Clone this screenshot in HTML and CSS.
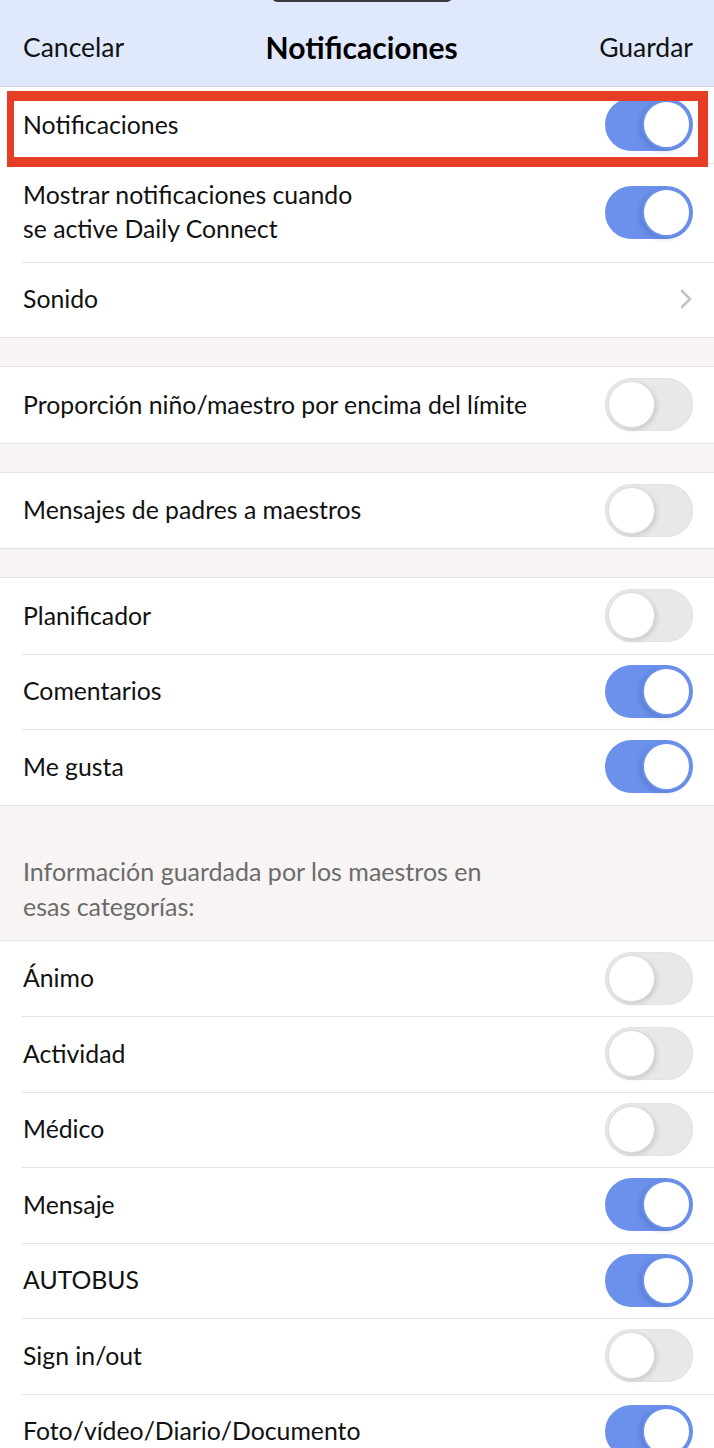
FILE: index.html
```html
<!DOCTYPE html>
<html>
<head>
    <title>Notificaciones</title>
    <link rel="stylesheet" href="styles.css">
</head>
<body>
    <div class="notch"></div>

    <div class="navbar">
        <span class="nav-button">Cancelar</span>
        <span class="nav-title">Notificaciones</span>
        <span class="nav-button">Guardar</span>
    </div>

    <div class="section">
        <div class="row highlighted">
            <span class="label">Notificaciones</span>
            <span class="switch on"></span>
        </div>
        <div class="row tall">
            <span class="label">Mostrar notificaciones cuando<br>se active Daily Connect</span>
            <span class="switch on"></span>
        </div>
        <div class="row">
            <span class="label">Sonido</span>
            <svg class="chevron" width="14" height="22" viewBox="0 0 14 22">
                <path d="M3 3 L11 11 L3 19" fill="none" stroke="#c4c4c8" stroke-width="2.6" stroke-linecap="round" stroke-linejoin="round"/>
            </svg>
        </div>
    </div>

    <div class="gap"></div>

    <div class="section">
        <div class="row">
            <span class="label">Proporción niño/maestro por encima del límite</span>
            <span class="switch"></span>
        </div>
    </div>

    <div class="gap"></div>

    <div class="section">
        <div class="row">
            <span class="label">Mensajes de padres a maestros</span>
            <span class="switch"></span>
        </div>
    </div>

    <div class="gap"></div>

    <div class="section">
        <div class="row">
            <span class="label">Planificador</span>
            <span class="switch"></span>
        </div>
        <div class="row">
            <span class="label">Comentarios</span>
            <span class="switch on"></span>
        </div>
        <div class="row">
            <span class="label">Me gusta</span>
            <span class="switch on"></span>
        </div>
    </div>

    <div class="group-header">
        Información guardada por los maestros en<br>esas categorías:
    </div>

    <div class="section">
        <div class="row">
            <span class="label">Ánimo</span>
            <span class="switch"></span>
        </div>
        <div class="row">
            <span class="label">Actividad</span>
            <span class="switch"></span>
        </div>
        <div class="row">
            <span class="label">Médico</span>
            <span class="switch"></span>
        </div>
        <div class="row">
            <span class="label">Mensaje</span>
            <span class="switch on"></span>
        </div>
        <div class="row">
            <span class="label">AUTOBUS</span>
            <span class="switch on"></span>
        </div>
        <div class="row">
            <span class="label">Sign in/out</span>
            <span class="switch"></span>
        </div>
        <div class="row">
            <span class="label">Foto/vídeo/Diario/Documento</span>
            <span class="switch on"></span>
        </div>
    </div>
</body>
</html>
```

FILE: styles.css
```css
body
{
    margin: 0;
    background-color: #f7f4f3;
    font-family: Lato, "Noto Sans", sans-serif;
    color: #111;
    overflow: hidden;
}

.notch
{
    position: absolute;
    top: -8px;
    left: 272px;
    width: 180px;
    height: 10px;
    background-color: #3a3a3e;
    border-radius: 6px;
}

.navbar
{
    height: 87px;
    box-sizing: border-box;
    background-color: #e0e9fc;
    border-bottom: 1px solid #cfd4dd;
    display: flex;
    align-items: center;
    justify-content: space-between;
    padding: 8px 21px 0 23px;
}

.nav-button
{
    font-size: 26.5px;
    color: #111;
}

.nav-title
{
    font-size: 30px;
    font-weight: bold;
    color: #000;
}

.section
{
    background-color: #fff;
}

.row
{
    position: relative;
    height: 75.5px;
    box-sizing: border-box;
    display: flex;
    align-items: center;
    justify-content: space-between;
    padding: 0 21px 0 23px;
}

.row + .row::before
{
    content: "";
    position: absolute;
    top: 0;
    left: 22px;
    right: 0;
    height: 1px;
    background-color: #e3e3e3;
}

.row.tall
{
    height: 99px;
}

.label
{
    font-size: 24.8px;
    line-height: 34px;
}

.highlighted::after
{
    content: "";
    position: absolute;
    top: 4px;
    left: 7px;
    right: 6px;
    bottom: -4px;
    border-style: solid;
    border-color: #e63d26;
    border-width: 10px 10px 10px 7px;
    z-index: 2;
}

.gap
{
    height: 28px;
    border-top: 1px solid #e3e3e3;
    border-bottom: 1px solid #e3e3e3;
}

.group-header
{
    border-top: 1px solid #e3e3e3;
    border-bottom: 1px solid #e3e3e3;
    padding: 48px 23px 16px 23px;
    font-size: 25px;
    line-height: 35px;
    color: #6b6b6b;
}

.switch
{
    position: relative;
    width: 88px;
    height: 53px;
    border-radius: 27px;
    background-color: #e8e8ea;
    box-shadow: inset 0 0 0 1px #e2e2e4;
    flex-shrink: 0;
}

.switch::after
{
    content: "";
    position: absolute;
    top: 3px;
    left: 3px;
    width: 45px;
    height: 45px;
    border-radius: 50%;
    background-color: #fff;
    border: 1px solid #dcdcdc;
    box-shadow: 2px 2px 4px rgba(0, 0, 0, 0.12);
}

.switch.on
{
    background-color: #6b91ec;
    box-shadow: none;
}

.switch.on::after
{
    left: 37px;
    top: 2px;
    width: 45px;
    height: 45px;
    border: 2px solid #6b91ec;
    box-shadow: -3px 2px 5px rgba(40, 60, 120, 0.2);
}
```
